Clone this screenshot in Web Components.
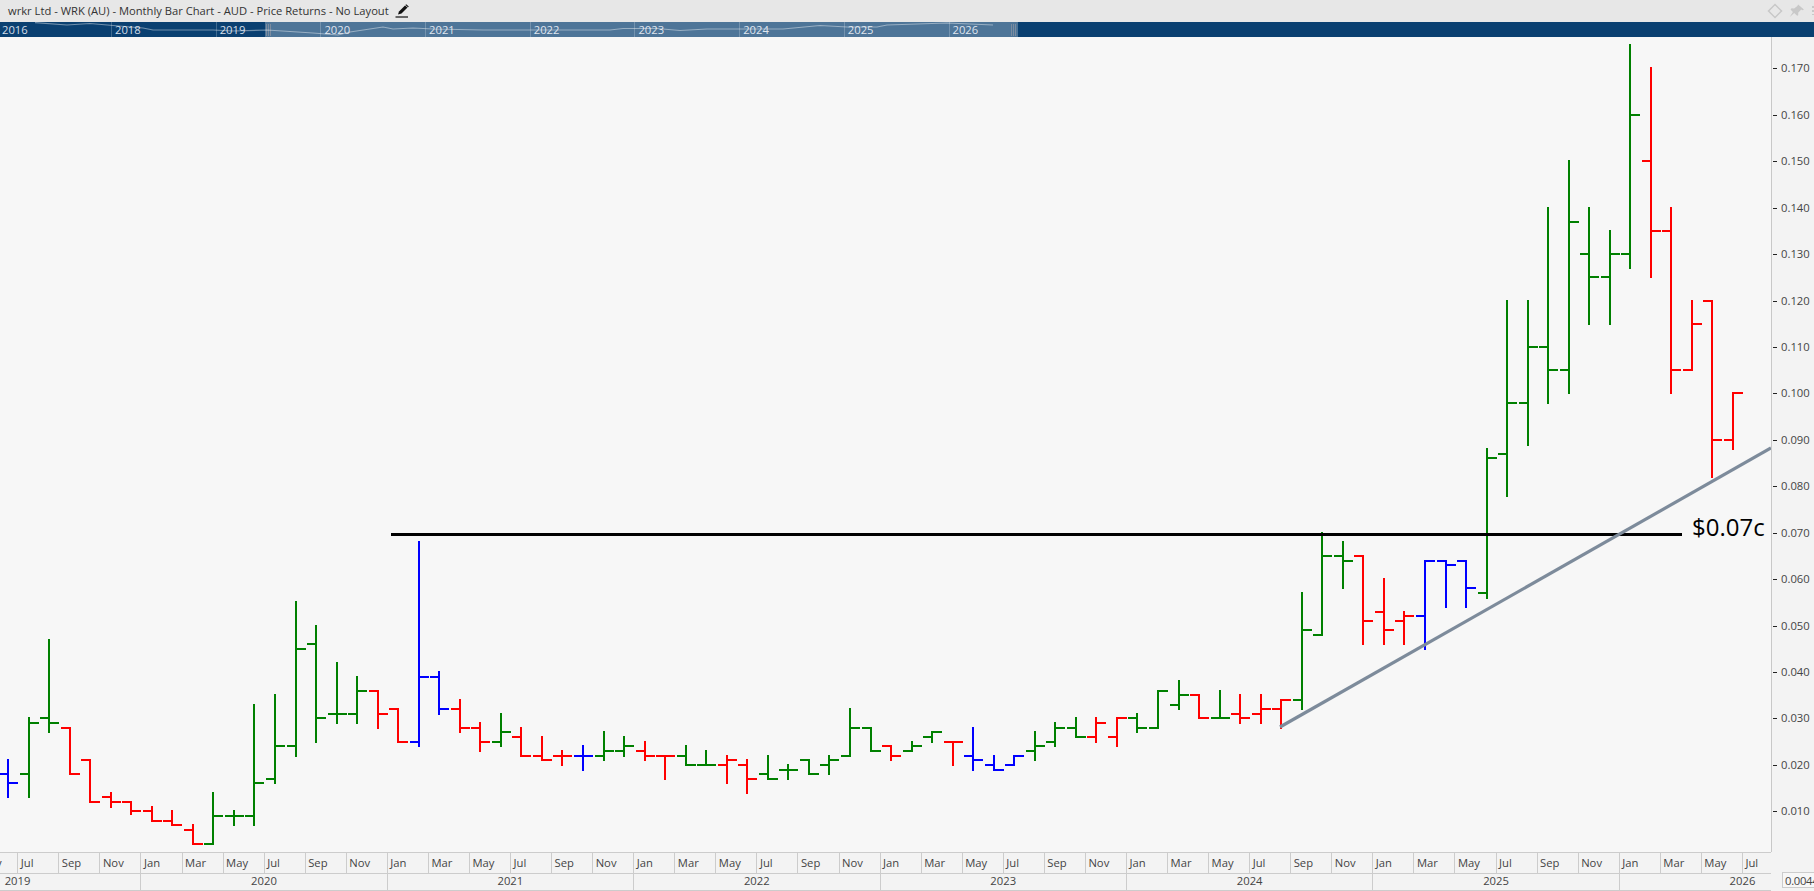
<!DOCTYPE html>
<html>
<head>
<meta charset="utf-8">
<title>wrkr Ltd - WRK (AU)</title>
<style>
    html, body { margin: 0; height: 100%; overflow: hidden; background: #f3f3f3; }
    body { display: flex; flex-direction: column; width: 1814px; height: 891px; font-family: "Open Sans", sans-serif; }
    .middle { display: flex; height: 815px; }
</style>
</head>
<body>
<title-bar>wrkr Ltd - WRK (AU) - Monthly Bar Chart - AUD - Price Returns - No Layout</title-bar>
<nav-strip></nav-strip>
<div class="middle">
    <bar-chart></bar-chart>
    <price-axis></price-axis>
</div>
<time-axis></time-axis>

<script>
// Chart geometry, shared by the chart and its axes
const BAR_STEP = 20.536;
const barX = i => Math.round(8 + BAR_STEP * i);
const priceY = mil => Math.round(811.3 - (mil - 10) * 4.643);

// colour, high, low, open, close (price in tenths of a cent)
const BARS = [
    ['b',21,13,18,16],['g',30,13,18,29],['g',47,27,30,29],['r',28,18,28,18],['r',21,12,21,12],
    ['r',14,11,13,12],['r',12,9.4,12,10],['r',11,8,10,8],['r',10,7,8,7],['r',7,3,6,3],
    ['g',14,3,3,9],['g',10,7,9,9],['g',33,7,9,16],['g',35,16,17,24],['g',55,22,24,45],
    ['g',50,25,46,30],['g',42,29,31,31],['g',39,29,31,36],['r',36,28,36,31],['r',32,25,32,25],
    ['b',68,24,25,39],['b',40,31,39,32],['r',34,27,32,28],['r',29,23,28,25],['g',31,24,25,27],
    ['r',28,22,26,22],['r',26,21,22,21],['r',23,20,22,22],['b',24,19,22,22],['g',27,21,22,23],
    ['g',26,22,23,24],['r',25,21,23,22],['r',22,17,22,22],['g',24,20,22,20],['g',23,20,20,20],
    ['r',22,16,20,21],['r',21,14,20,17],['g',22,17,18,17],['g',20,17,19,19],['g',21,18,21,18],
    ['g',22,18,20,21],['g',32,22,22,28],['g',28,23,28,23],['r',24,21,24,22],['g',25,23,23,24],
    ['g',27,25,26,27],['r',25,20,25,25],['b',28,19,22,21],['b',22,19,20,19],['b',22,20,20,22],
    ['g',27,21,23,24],['g',29,24,25,28],['g',30,26,28,26],['r',30,25,26,29],['r',30,24,26,30],
    ['g',31,27,30,28],['g',36,28,28,36],['g',38,32,33,35],['r',35,30,35,30],['g',36,30,30,30],
    ['r',35,29,31,30],['r',35,29,31,32],['r',34,28,32,34],['g',57,32,34,49],['g',70,48,48,65],
    ['g',68,58,65,64],['r',65,46,65,51],['r',60,46,53,49],['r',53,46,51,52],['b',64,45,52,64],
    ['b',64,54,64,63],['b',64,54,64,58],['g',88,56,57,86],['g',120,78,87,98],['g',120,89,98,110],
    ['g',140,98,110,105],['g',150,100,105,137],['g',140,115,130,125],['g',135,115,125,130],['g',175,127,130,160],
    ['r',170,125,150,135],['r',140,100,135,105],['r',120,105,105,115],['r',120,82,120,90],['r',100,88,90,100]
];

const COLOURS = { g: '#008000', r: '#ff0000', b: '#0000ff' };

class TitleBar extends HTMLElement {
    constructor() {
        super();
        this.attachShadow({ mode: 'open' });
        this.shadowRoot.innerHTML = `
            <style>
                :host {
                    display: flex;
                    align-items: center;
                    height: 22px;
                    flex-shrink: 0;
                    padding-left: 8px;
                    background: #e7e7e7;
                    color: #333333;
                    font: 11.2px "Open Sans", sans-serif;
                    overflow: hidden;
                }
                .label { white-space: nowrap; position: relative; top: -1px; }
                .pencil { margin-left: 6px; width: 14px; height: 14px; }
                .tools { margin-left: auto; display: flex; align-items: center; gap: 5px; }
            </style>
            <span class="label"><slot></slot></span>
            <svg class="pencil" viewBox="0 0 14 14">
                <path d="M4 7.5 10 1.5 12.5 3.5 6.5 9.5 3 10.5Z" fill="#111111"/>
                <path d="M10.8 0.6 13.4 2.9" stroke="#111111" stroke-width="1.2"/>
                <path d="M0.5 13H13" stroke="#111111" stroke-width="1.2"/>
            </svg>
            <div class="tools">
                <svg width="16" height="16" viewBox="0 0 16 16">
                    <path d="M8 1.5 14.5 8 8 14.5 1.5 8Z" fill="none" stroke="#c8c8c8" stroke-width="1.5"/>
                </svg>
                <svg width="17" height="15" viewBox="0 0 16 14">
                    <path d="M9.5 0.5 15 5 13.6 5.8 12.4 5 9.6 8.2 9.6 10.6 8.6 11 5.8 8.4 1.5 12.5 4.6 7.4 2.4 5 3.4 4 5.8 4.2 8.8 1.8Z" fill="#c8c8c8"/>
                </svg>
                <svg width="4" height="14" viewBox="0 0 4 14">
                    <path d="M3 2V11" stroke="#c8c8c8" stroke-width="2" stroke-dasharray="2 2"/>
                </svg>
            </div>
        `;
    }
}

class NavStrip extends HTMLElement {
    constructor() {
        super();
        this.attachShadow({ mode: 'open' });
        const years = ['2018', '2019', '2020', '2021', '2022', '2023', '2024', '2025', '2026'];
        const cells = years.map(y => `<div class="year">${y}</div>`).join('');
        this.shadowRoot.innerHTML = `
            <style>
                :host {
                    display: block;
                    position: relative;
                    height: 15px;
                    flex-shrink: 0;
                    background: #0a4071;
                    overflow: hidden;
                }
                .years { display: flex; height: 15px; }
                .first { width: 111px; padding-left: 2px; box-sizing: border-box; }
                .year {
                    width: 104.7px;
                    padding-left: 3px;
                    box-sizing: border-box;
                    border-left: 1px solid rgba(255, 255, 255, 0.22);
                }
                .first, .year {
                    flex-shrink: 0;
                    color: #d3dde8;
                    font: 11.25px/15px "Open Sans", sans-serif;
                }
                .window {
                    position: absolute;
                    left: 265px;
                    top: 0;
                    width: 753px;
                    height: 15px;
                    background: rgba(255, 255, 255, 0.28);
                }
                .grip {
                    position: absolute;
                    top: 2px;
                    width: 6px;
                    height: 12px;
                    background: repeating-linear-gradient(90deg, #7b8ca0 0 1px, transparent 1px 2px);
                }
                .spark { position: absolute; left: 0; top: 0; }
            </style>
            <div class="years">
                <div class="first">2016</div>
                ${cells}
            </div>
            <div class="window">
                <div class="grip" style="left: 1px"></div>
                <div class="grip" style="right: 1px"></div>
            </div>
            <svg class="spark" width="1814" height="15" viewBox="0 22 1814 15">
                <polyline fill="none" stroke="rgba(255,255,255,0.42)" stroke-width="1.2"
                    points="35,22.7 67,25 90,23.5 113,25.5 143,28 153,30 187,30 213,30 233,31 267,30 313,33 338,35 350,32 383,27 393,29 413,28 433,29 483,30 533,30 610,30 623,28.5 657,28.5 680,30.5 707,29 783,29 820,25.5 847,27 877,27 887,25 947,23 993,25"/>
            </svg>
        `;
    }
}

class BarChart extends HTMLElement {
    constructor() {
        super();
        this.attachShadow({ mode: 'open' });
        const bars = BARS.map(([c, high, low, open, close], i) => {
            const x = barX(i);
            const yo = priceY(open), yc = priceY(close);
            return `<path stroke="${COLOURS[c]}" d="M${x} ${priceY(high) - 1}V${priceY(low) + 1}M${x - 9} ${yo}H${x}M${x} ${yc}H${x + 10}"/>`;
        }).join('');
        this.shadowRoot.innerHTML = `
            <style>
                :host {
                    display: block;
                    width: 1771px;
                    height: 815px;
                    flex-shrink: 0;
                    background: #f7f7f7;
                }
                svg { display: block; }
                .bars path { stroke-width: 2; fill: none; shape-rendering: crispEdges; }
                .note { font: 24px "Open Sans", sans-serif; fill: #000000; }
            </style>
            <svg width="1771" height="815" viewBox="0 37 1771 815">
                <g class="bars">${bars}</g>
                <line x1="391" y1="534.5" x2="1682" y2="534.5" stroke="#000000" stroke-width="3"/>
                <line x1="1280" y1="727" x2="1771" y2="448" stroke="#7d8b9b" stroke-width="3.2"/>
                <text class="note" x="1692" y="536">$0.07c</text>
            </svg>
        `;
    }
}

class PriceAxis extends HTMLElement {
    constructor() {
        super();
        this.attachShadow({ mode: 'open' });
        let ticks = '';
        for (let mil = 10; mil <= 170; mil += 10) {
            const y = 811.3 - (mil - 10) * 4.643;
            const ty = Math.round(y);
            ticks += `<path d="M1 ${ty}.5H5" stroke="#222222"/>`;
            ticks += `<text x="9" y="${ty + 4}">${(mil / 1000).toFixed(3)}</text>`;
        }
        this.shadowRoot.innerHTML = `
            <style>
                :host {
                    display: block;
                    width: 43px;
                    height: 815px;
                    flex-shrink: 0;
                    box-sizing: border-box;
                    background: #f3f3f3;
                    border-left: 1px solid #c8c8c8;
                    overflow: hidden;
                }
                svg { display: block; }
                text { font: 11.25px "Open Sans", sans-serif; fill: #444444; }
            </style>
            <svg width="42" height="815" viewBox="0 37 42 815">${ticks}</svg>
        `;
    }
}

class TimeAxis extends HTMLElement {
    constructor() {
        super();
        this.attachShadow({ mode: 'open' });
        const names = ['Jan', 'Mar', 'May', 'Jul', 'Sep', 'Nov'];
        let months = '';
        // from May 2019 to Jul 2026, one cell every two months
        for (let n = 2; n < 2 + 44; n++) {
            months += `<div class="month">${names[n % 6]}</div>`;
        }
        let years = '';
        for (let y = 2019; y <= 2026; y++) years += `<div class="year">${y}</div>`;
        this.shadowRoot.innerHTML = `
            <style>
                :host {
                    display: flex;
                    height: 39px;
                    flex-shrink: 0;
                    background: #f3f3f3;
                    color: #444444;
                    font: 11.25px "Open Sans", sans-serif;
                }
                .rows { width: 1771px; flex-shrink: 0; overflow: hidden; }
                .months {
                    display: flex;
                    height: 20px;
                    margin-left: -23.8px;
                    border-top: 1px solid #cccccc;
                    margin-right: -2000px;
                }
                .month {
                    width: 41.07px;
                    flex-shrink: 0;
                    box-sizing: border-box;
                    padding-left: 2.5px;
                    line-height: 19px;
                    border-left: 1px solid #cccccc;
                }
                .years-wrap { border-top: 1px solid #cccccc; border-bottom: 1px solid #cccccc; height: 16px; overflow: hidden; }
                .years { display: flex; margin-left: -105.2px; height: 16px; width: 2200px; }
                .year {
                    width: 246.43px;
                    flex-shrink: 0;
                    box-sizing: border-box;
                    text-align: center;
                    line-height: 14px;
                    border-right: 1px solid #cccccc;
                }
                .corner { flex: 1; padding: 20px 0 0 11px; overflow: hidden; }
                .value {
                    display: block;
                    height: 16px;
                    width: 40px;
                    box-sizing: border-box;
                    padding-left: 2px;
                    line-height: 16px;
                    letter-spacing: -0.3px;
                    background: #f7f7f7;
                    border: 1px solid #cccccc;
                    white-space: nowrap;
                }
            </style>
            <div class="rows">
                <div class="months">${months}</div>
                <div class="years-wrap"><div class="years">${years}</div></div>
            </div>
            <div class="corner"><span class="value">0.0044</span></div>
        `;
    }
}

customElements.define('title-bar', TitleBar);
customElements.define('nav-strip', NavStrip);
customElements.define('bar-chart', BarChart);
customElements.define('price-axis', PriceAxis);
customElements.define('time-axis', TimeAxis);
</script>
</body>
</html>
